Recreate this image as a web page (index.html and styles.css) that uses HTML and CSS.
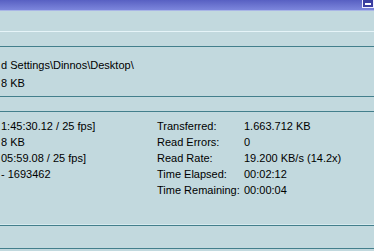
FILE: index.html
```html
<!DOCTYPE html>
<html lang="en">
<head>
  <meta charset="UTF-8">
  <title>Capture Progress</title>
  <link rel="stylesheet" href="styles.css">
</head>
<body>
  <div class="window">
    <div class="titlebar">
      <span class="sys-btn"><span class="sys-bar"></span></span>
    </div>
    <div class="strip strip-top"></div>
    <div class="strip strip-mid"></div>

    <div class="panel paths">
      <p>d Settings\Dinnos\Desktop\</p>
      <p>8 KB</p>
    </div>

    <div class="strip strip-sep"></div>

    <div class="panel stats">
      <div class="col">
        <p>1:45:30.12 / 25 fps]</p>
        <p>8 KB</p>
        <p>05:59.08 / 25 fps]</p>
        <p>- 1693462</p>
      </div>
      <div class="col">
        <p>Transferred:</p>
        <p>Read Errors:</p>
        <p>Read Rate:</p>
        <p>Time Elapsed:</p>
        <p>Time Remaining:</p>
      </div>
      <div class="col">
        <p>1.663.712 KB</p>
        <p>0</p>
        <p>19.200 KB/s (14.2x)</p>
        <p>00:02:12</p>
        <p>00:00:04</p>
      </div>
    </div>

    <div class="strip strip-bottom"></div>
  </div>
</body>
</html>
```

FILE: styles.css
```css
body {
  margin: 0;
  background-color: #c2d9de;
  font-family: "Liberation Sans", Arial, sans-serif;
  font-size: 11px;
  color: #000;
  overflow: hidden;
}
p {
  margin: 0;
  white-space: nowrap;
}
.window {
  display: flex;
  flex-direction: column;
  width: 374px;
  height: 251px;
  background-color: #c2d9de;
}
.titlebar {
  height: 10px;
  background: linear-gradient(#5860c2, #7c86dc);
  border-bottom: 1px solid #a9b6e6;
  display: flex;
  justify-content: flex-end;
}
.sys-btn {
  width: 10px;
  height: 7px;
  margin-right: 0;
  background-color: #3a3ea0;
  border: 1px solid #f0f0ff;
  border-top: none;
  display: flex;
  align-items: center;
  justify-content: center;
}
.sys-bar {
  width: 6px;
  height: 2px;
  border: 1px solid #ffffff;
  box-sizing: border-box;
}
.strip-top {
  height: 20px;
  border-bottom: 1px solid #e6f4f8;
}
.strip-mid {
  height: 14px;
  border-bottom: 1px solid #437f8c;
}
.paths {
  height: 40px;
  padding: 9px 0 0 1px;
  border-bottom: 1px solid #437f8c;
}
.paths p {
  line-height: 18px;
}
.strip-sep {
  height: 14px;
  border-bottom: 1px solid #437f8c;
}
.stats {
  height: 106px;
  padding: 6px 0 0 1px;
  display: grid;
  grid-template-columns: 156px 87px auto;
  border-bottom: 1px solid #d6eaee;
}
.stats p {
  line-height: 16px;
}
.strip-bottom {
  height: 22px;
  border-top: 1px solid #437f8c;
  border-bottom: 1px solid #437f8c;
}
```
